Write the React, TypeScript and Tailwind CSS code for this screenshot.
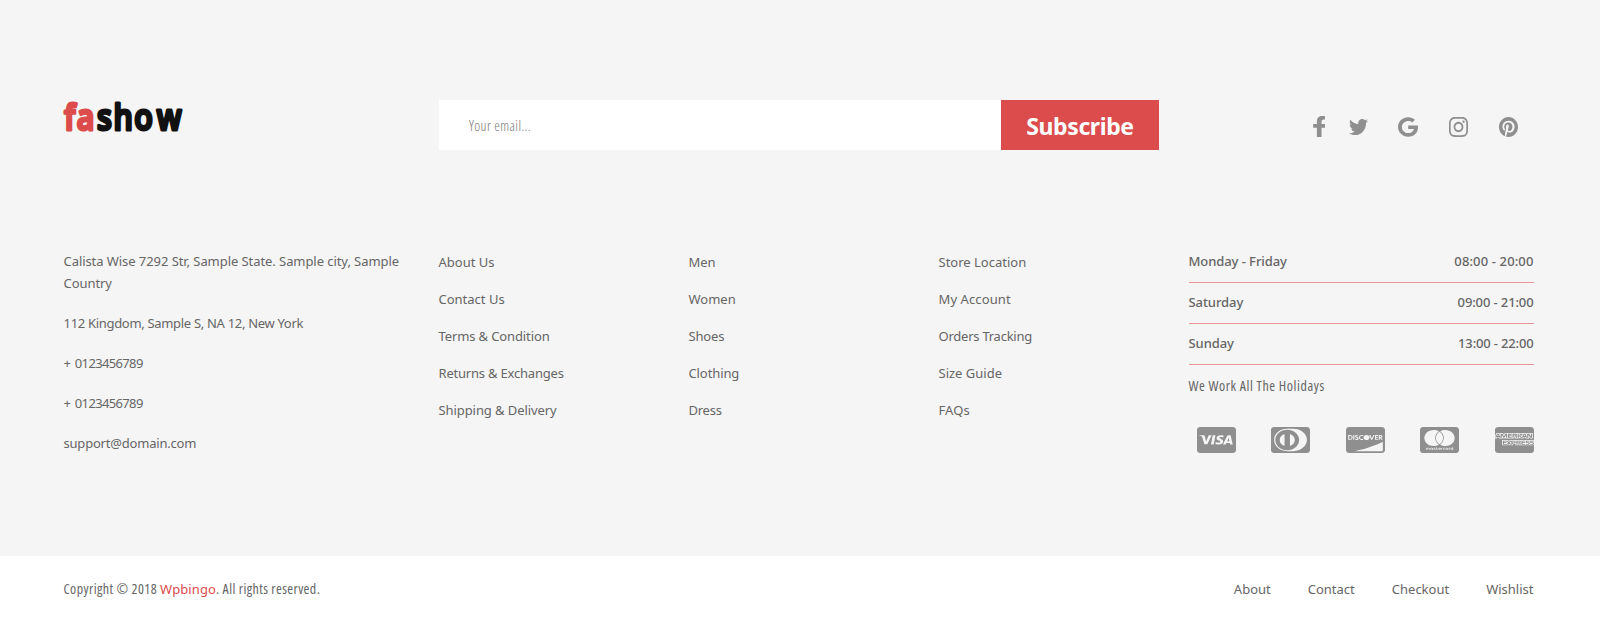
import React from "react";
import {
  FaCcAmex,
  FaCcDinersClub,
  FaCcDiscover,
  FaCcMastercard,
  FaCcVisa,
  FaFacebookF,
  FaGoogle,
  FaInstagram,
  FaPinterest,
  FaTwitter,
} from "react-icons/fa";

type Item = { label: string; className?: string };

const linkColumns: Item[][] = [
  [
    { label: "About Us" },
    { label: "Contact Us" },
    { label: "Terms & Condition", className: "tracking-[-0.12px]" },
    { label: "Returns & Exchanges", className: "tracking-[-0.2px]" },
    { label: "Shipping & Delivery", className: "tracking-[-0.08px]" },
  ],
  [
    { label: "Men" },
    { label: "Women" },
    { label: "Shoes", className: "tracking-[-0.15px]" },
    { label: "Clothing", className: "tracking-[-0.1px]" },
    { label: "Dress", className: "tracking-[-0.25px]" },
  ],
  [
    { label: "Store Location" },
    { label: "My Account", className: "tracking-[0.1px]" },
    { label: "Orders Tracking", className: "tracking-[-0.24px]" },
    { label: "Size Guide" },
    { label: "FAQs", className: "tracking-[0.1px]" },
  ],
];

const hours = [
  { day: "Monday - Friday", time: "08:00 - 20:00", className: "tracking-[0.13px]" },
  { day: "Saturday", time: "09:00 - 21:00", className: "tracking-[-0.12px]" },
  { day: "Sunday", time: "13:00 - 22:00", className: "tracking-[-0.16px]" },
];

const cards = [FaCcVisa, FaCcDinersClub, FaCcDiscover, FaCcMastercard, FaCcAmex];

function Logo() {
  return (
    <svg className="-ml-1 -mt-2 block h-12 w-[136px]" viewBox="-4 -8 136 48" role="img" aria-label="fashow">
      <text
        className="font-['Open_Sans',sans-serif] font-semibold"
        transform="scale(0.87 1.04)"
        x="0.4 14.7 37.9 56.9 80.8 106.5"
        y="29.2"
        fontSize="35"
        strokeWidth="3"
        strokeLinejoin="round"
        fill="#111111"
        stroke="#111111"
      >
        <tspan fill="#dc4c4c" stroke="#dc4c4c">fa</tspan>show
      </text>
    </svg>
  );
}

export default function App() {
  return (
    <footer className="h-[623px] w-[1600px] overflow-hidden bg-[#f5f5f5] font-['Noto_Sans',sans-serif] text-[13px] text-[#666666]">
      <div className="flex h-[556px] flex-col pl-16 pr-[66px] pt-[100px]">
        <div className="flex h-[150px]">
          <div className="w-[375px]">
            <Logo />
          </div>
          <form className="flex h-[50px] w-[720px]">
            <input
              className="h-[50px] w-[562px] bg-white px-[30px] font-['Open_Sans',sans-serif] text-[14px] font-light tracking-[0.42px] outline-none [font-stretch:75%] placeholder:text-[#777777]"
              placeholder="Your email..."
            />
            <button
              type="button"
              className="h-[50px] w-[158px] bg-[#dc4c4c] pt-[3px] text-[23px] font-bold tracking-[-0.4px] text-white"
            >
              Subscribe
            </button>
          </form>
          <div className="ml-[154px] flex h-5 w-[206px] text-[#8f8f8f]">
            <FaFacebookF className="mt-4 h-[21px] w-[12px] shrink-0" viewBox="20 0 260 512" preserveAspectRatio="none" />
            <FaTwitter className="ml-[24px] mt-[17px] h-[20px] w-[19px] shrink-0" preserveAspectRatio="none" />
            <FaGoogle className="ml-[30px] mt-[17px] h-[20px] w-[20px] shrink-0" preserveAspectRatio="none" />
            <FaInstagram className="ml-[31px] mt-[17px] h-[20px] w-[19px] shrink-0" viewBox="0 32 448 448" preserveAspectRatio="none" />
            <FaPinterest className="ml-[31px] mt-[17px] h-[20px] w-[19px] shrink-0" viewBox="0 8 496 496" preserveAspectRatio="none" />
          </div>
        </div>

        <div className="flex">
          <address className="-ml-[0.5px] flex w-[375px] flex-col gap-[18px] leading-[22px] not-italic">
            <p className="tracking-[-0.065px]">
              Calista Wise 7292 Str, Sample State. Sample city, Sample
              <br />
              Country
            </p>
            <p className="tracking-[-0.31px]">112 Kingdom, Sample S, NA 12, New York</p>
            <p className="tracking-[-0.65px] [word-spacing:1.8px]">+ 0123456789</p>
            <p className="tracking-[-0.65px] [word-spacing:1.8px]">+ 0123456789</p>
            <p className="tracking-[-0.2px]">support@domain.com</p>
          </address>
          {linkColumns.map((column) => (
            <ul key={column[0].label} className="flex w-[250px] flex-col gap-[15px] pt-px leading-[22px]">
              {column.map(({ label, className }) => (
                <li key={label} className={className}>
                  <a>{label}</a>
                </li>
              ))}
            </ul>
          ))}
          <div className="w-[345px]">
            {hours.map(({ day, time, className }, i) => (
              <div
                key={day}
                className={`flex justify-between border-b border-[#ec9399] font-medium leading-[22px] ${i === 0 ? "h-[33px]" : "h-[41px] pt-[8px]"}`}
              >
                <span className="tracking-[-0.08px]">{day}</span>
                <span className={className}>{time}</span>
              </div>
            ))}
            <p className="mt-[10px] font-['Open_Sans',sans-serif] text-[14px] leading-[22px] tracking-[0.57px] [font-stretch:75%]">
              We Work All The Holidays
            </p>
            <div className="mt-[30px] flex gap-[35.5px] pl-2 text-[#8f8f8f]">
              {cards.map((Card, i) => (
                <Card key={i} className="h-[26px] w-[39px] shrink-0" viewBox="0 32 576 448" preserveAspectRatio="none" />
              ))}
            </div>
          </div>
        </div>
      </div>

      <div className="flex h-[67px] items-center justify-between bg-white pl-[63.5px] pr-[66.5px]">
        <p className="pb-px font-['Open_Sans',sans-serif] text-[14px] leading-[20px] tracking-[0.42px] [font-stretch:75%]">
          Copyright © 2018{" "}
          <a className="font-['Noto_Sans',sans-serif] text-[13px] tracking-[0.1px] text-[#dc4c4c]">Wpbingo</a>. All rights reserved.
        </p>
        <nav className="flex gap-[37px]">
          <a>About</a>
          <a>Contact</a>
          <a>Checkout</a>
          <a>Wishlist</a>
        </nav>
      </div>
    </footer>
  );
}
